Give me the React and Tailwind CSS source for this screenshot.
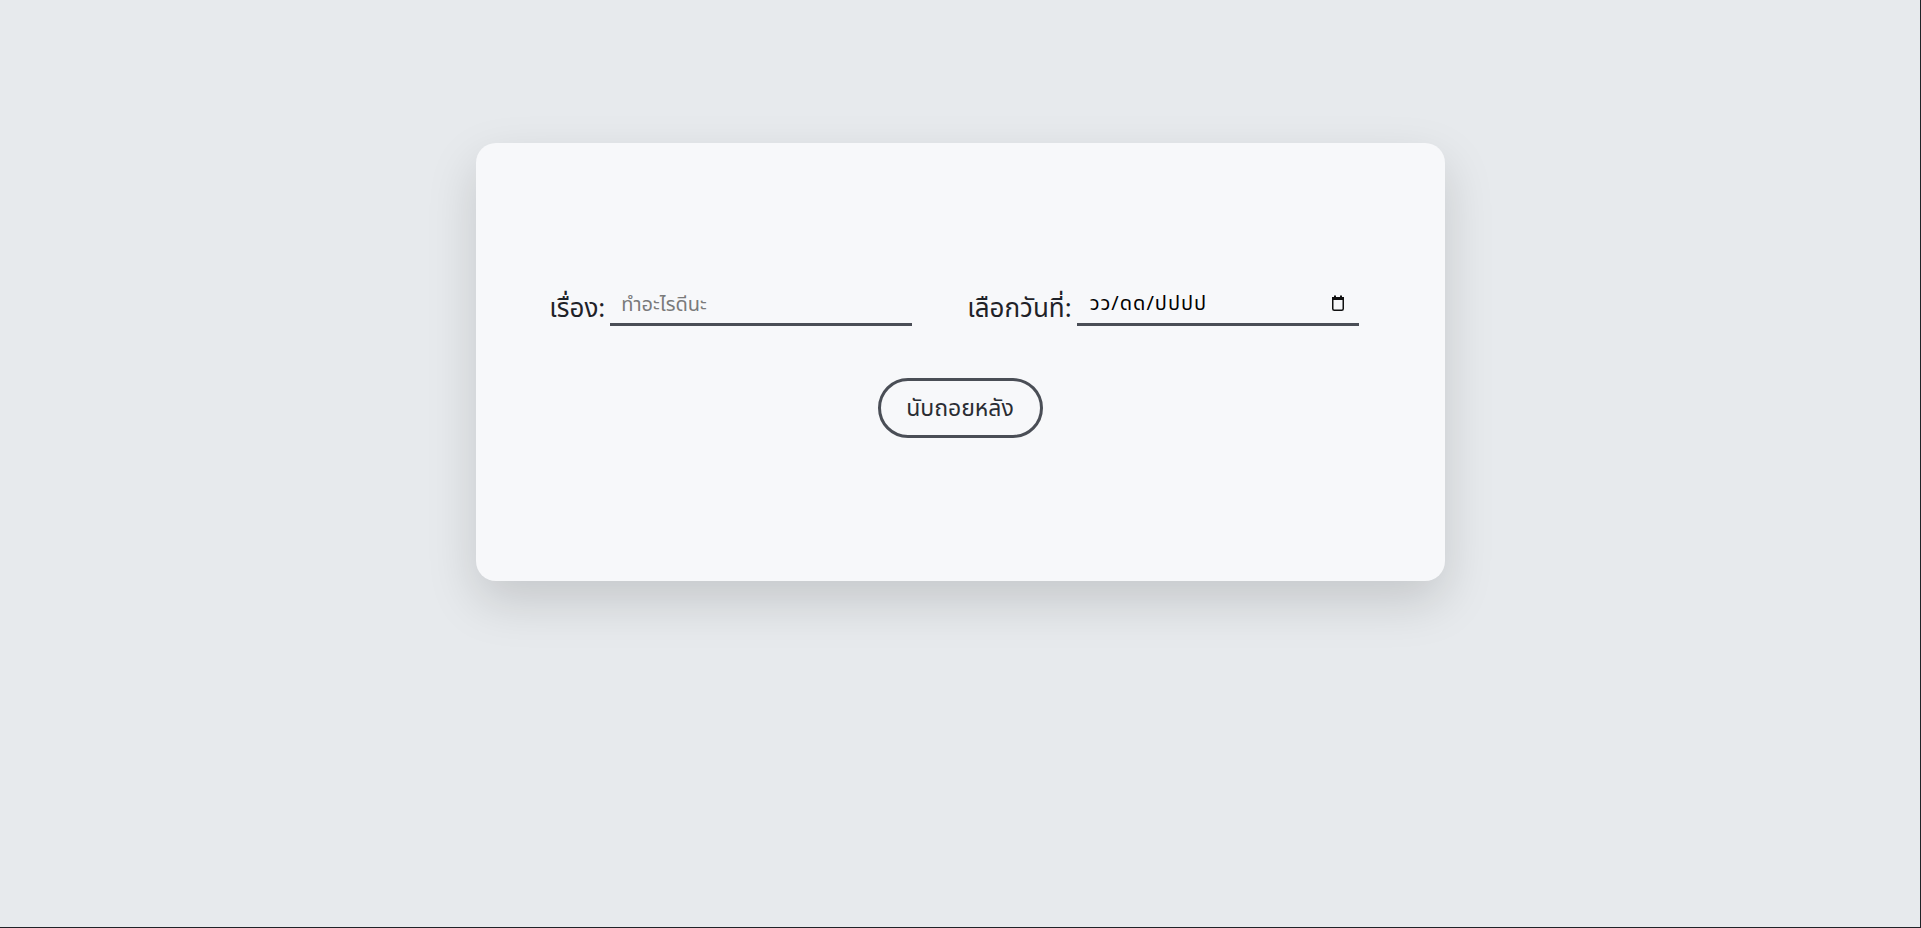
export default function App() {
  return (
    <div className="w-full h-[928px] bg-[#202328]">
      <div
        className="w-[1920px] h-[927px] bg-[#e7eaed] flex flex-col items-center pt-[143px]"
        style={{ fontFamily: '"Noto Sans", "Noto Sans Thai", sans-serif' }}
      >
        <div className="w-[969px] h-[438px] bg-[#f7f8fa] rounded-[20px] shadow-[0_20px_50px_rgba(0,0,0,0.15)] flex flex-col items-center justify-center gap-[52px]">
          <div className="flex items-end gap-[55px] ml-[-12px] mt-[1px]">
            <div className="flex items-end">
              <span className="text-[26px] leading-[34px] text-[#1f2228] mr-[5px] mb-[2px]">เรื่อง:</span>
              <input
                type="text"
                placeholder="ทำอะไรดีนะ"
                className="w-[302px] h-[38px] bg-transparent border-b-[3px] border-[#4a4e56] px-[11px] pb-[3px] text-[20px] text-[#1f2228] placeholder:text-[#7a7a7a] outline-none"
              />
            </div>
            <div className="flex items-end">
              <span className="text-[26px] leading-[34px] text-[#1f2228] mr-[5px] mb-[2px]">เลือกวันที่:</span>
              <div className="w-[282px] h-[38px] border-b-[3px] border-[#4a4e56] pl-[13px] pr-[13px] pb-[4px] flex items-center justify-between text-[20px] text-black">
                <span className="tracking-[1px]">วว/ดด/ปปปป</span>
                <svg width="16" height="18" viewBox="0 0 16 18" className="mt-[1px]">
                  <rect x="2" y="2" width="12" height="3" fill="#111" />
                  <rect x="4" y="0.5" width="2" height="3" fill="#111" />
                  <rect x="10" y="0.5" width="2" height="3" fill="#111" />
                  <rect x="2.75" y="2.75" width="10.5" height="12.5" rx="1.5" fill="none" stroke="#111" strokeWidth="1.5" />
                </svg>
              </div>
            </div>
          </div>
          <button className="w-[165px] h-[60px] rounded-full border-[3px] border-[#4a4e56] bg-transparent text-[23px] text-[#2a2d33]">
            นับถอยหลัง
          </button>
        </div>
      </div>
    </div>
  );
}
